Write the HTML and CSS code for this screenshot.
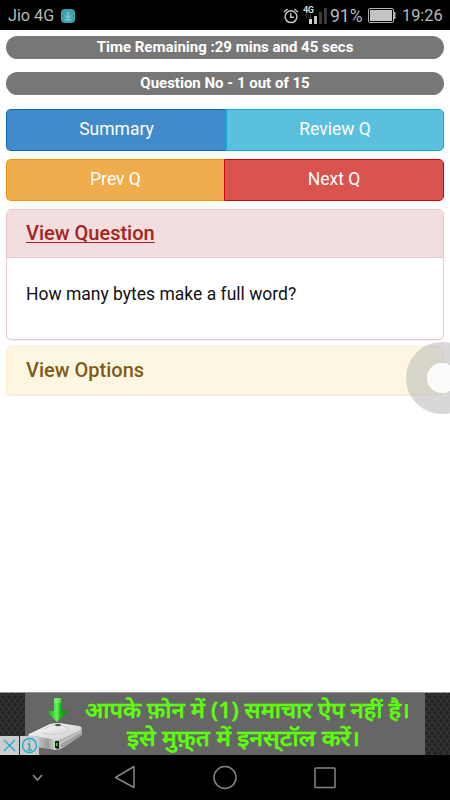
FILE: index.html
```html
<!DOCTYPE html>
<html lang="en">
<head>
    <meta charset="UTF-8">
    <meta name="viewport" content="width=device-width, initial-scale=1.0">
    <title>Quiz</title>
    <link rel="stylesheet" href="styles.css">
</head>
<body>
    <div class="status-bar">
        <span class="carrier">Jio 4G</span>
        <svg class="download" width="14" height="14" viewBox="0 0 14 14">
            <rect width="14" height="14" rx="4" fill="#38a3ac"/>
            <path d="M7 3v6M4 6.5l3 3 3-3M3.5 11h7" fill="none" stroke="#b5dce0" stroke-width="0.9"/>
        </svg>
        <svg class="alarm" width="16" height="16" viewBox="0 0 16 16" fill="none" stroke="#c4c4c4" stroke-width="1.5">
            <circle cx="8" cy="8.7" r="5.9"/>
            <path d="M1 4l3.6-3M15 4l-3.6-3M7.7 5.3v3.9h3.3"/>
        </svg>
        <svg class="signal" width="24" height="20" viewBox="0 0 24 20">
            <text class="net" x="0" y="8" textLength="11">4G</text>
            <path d="M3.5 8.5v5M1.5 11l2-2 2 2M5.5 11.5l2 2 2-2M7.5 8.5v5" fill="none" stroke="#333" stroke-width="1"/>
            <rect x="6" y="14" width="3" height="5" fill="#d5d5d5"/>
            <rect x="11" y="11" width="3" height="8" fill="#c4c4c4"/>
            <rect x="16" y="7" width="3" height="12" fill="#3b3b3b"/>
            <rect x="21" y="3" width="3" height="16" fill="#3b3b3b"/>
        </svg>
        <span class="percent">91%</span>
        <svg class="battery" width="28" height="15" viewBox="0 0 28 15">
            <rect x="0.5" y="0.5" width="25" height="14" rx="1.5" fill="none" stroke="#b5b5b5"/>
            <rect x="2" y="2" width="22" height="11" fill="#c4c4c4"/>
            <path d="M26 4h1.5v7H26z" fill="#b5b5b5"/>
        </svg>
        <span class="clock">19:26</span>
    </div>

    <div class="container">
        <div class="badge">Time Remaining :29 mins and 45 secs</div>
        <div class="badge">Question No - 1 out of 15</div>
        <div class="btn-group">
            <button class="btn btn-primary">Summary</button>
            <button class="btn btn-info">Review Q</button>
        </div>
        <div class="btn-group">
            <button class="btn btn-warning">Prev Q</button>
            <button class="btn btn-danger">Next Q</button>
        </div>
        <div class="panel panel-danger">
            <div class="panel-heading"><u>View Question</u></div>
            <div class="panel-body">How many bytes make a full word?</div>
        </div>
        <div class="panel panel-warning">
            <div class="panel-heading">View Options</div>
        </div>
        <svg class="assist" width="44" height="72" viewBox="0 0 44 72">
            <circle cx="36" cy="36" r="25.5" fill="none" stroke="#b4b4b4" stroke-opacity="0.52" stroke-width="21"/>
            <circle cx="36" cy="36" r="15" fill="#fbfbf9"/>
        </svg>
    </div>

    <div class="ad">
        <div class="ad-banner">
            <svg class="drive" width="60" height="61" viewBox="0 0 60 61">
                <defs>
                    <linearGradient id="arrow" x1="0" x2="1" y1="0" y2="0">
                        <stop offset="0" stop-color="#0c9410"/>
                        <stop offset="0.5" stop-color="#6bf05c"/>
                        <stop offset="0.65" stop-color="#14bd18"/>
                        <stop offset="1" stop-color="#087f0c"/>
                    </linearGradient>
                    <linearGradient id="top" x1="0" x2="1" y1="0" y2="1">
                        <stop offset="0" stop-color="#fff"/>
                        <stop offset="1" stop-color="#c9c9c9"/>
                    </linearGradient>
                    <linearGradient id="front" x1="0" x2="1" y1="0" y2="0">
                        <stop offset="0" stop-color="#eee"/>
                        <stop offset="0.7" stop-color="#999"/>
                        <stop offset="1" stop-color="#ddd"/>
                    </linearGradient>
                </defs>
                <path d="M3 42L28 31Q33 29 38 31L56 34 57 41 35 56 31 57 5 53z" fill="#999"/>
                <path d="M4 41L25 31Q30 30 34 30L54 33Q58 34 56 37L35 47Q32 48 28 47L5 43Q2 42 4 41z" fill="url(#top)"/>
                <path d="M4 42L31 47V57L5 53Q3 50 4 42z" fill="url(#front)"/>
                <path d="M34 48L57 37V42L36 56 32 57z" fill="#bbb"/>
                <path d="M36 52L57 40M36 54L56 42" stroke="#777" stroke-width="0.7"/>
                <path d="M19 36Q31 29 42 34Q47 37 38 40Q29 43 18 40" fill="none" stroke="#ccc" stroke-width="1"/>
                <ellipse cx="33" cy="32" rx="3" ry="1.3" fill="#555"/>
                <path d="M30 48h4v8l-4-1z" fill="#172717"/>
                <path d="M31 50h1.5v3H31z" fill="#42d33c"/>
                <path d="M29 5h7v13h7L32 29 21 18h8z" fill="url(#arrow)"/>
                <path d="M29 5h7v5h-7z" fill="#85eb79" opacity="0.6"/>
            </svg>
            <div class="ad-text" lang="hi">
                <svg width="328" height="60" viewBox="0 0 328 60">
                    <text x="0" y="25" textLength="325" lengthAdjust="spacingAndGlyphs">आपके फ़ोन में (1) समाचार ऐप नहीं है।</text>
                    <text x="42" y="53" textLength="233" lengthAdjust="spacingAndGlyphs">इसे मुफ़्&zwnj;त में इनस्&zwnj;टॉल करें।</text>
                </svg>
            </div>
        </div>
        <div class="ad-choices">
            <svg width="19" height="19" viewBox="0 0 19 19">
                <path d="M4 4l11 11M15 4L4 15" stroke="#18add2" stroke-width="1.3"/>
            </svg>
            <svg width="19" height="19" viewBox="0 0 19 19" fill="none" stroke="#18add2" stroke-width="1.4">
                <circle cx="9.5" cy="9.5" r="7"/>
                <path d="M7.5 8h2v6M7.3 14h4.5M8.8 5.3h1.4"/>
            </svg>
        </div>
    </div>

    <div class="nav-bar">
        <svg width="450" height="45" viewBox="0 0 450 45" fill="none" stroke="#858585" stroke-width="1.5">
            <path d="M33 20l4.5 5 4.5-5" stroke-width="1.8"/>
            <path d="M134 11.5v21L115.5 22.5z" stroke-linejoin="round"/>
            <circle cx="225" cy="22.5" r="11"/>
            <rect x="315" y="13" width="20" height="19.5" rx="0.8"/>
        </svg>
    </div>
</body>
</html>
```
FILE: styles.css
```css
* {
    box-sizing: border-box;
}
body {
    margin: 0;
    height: 800px;
    display: flex;
    flex-direction: column;
    background: #fff;
    font-family: Roboto, sans-serif;
    overflow: hidden;
}
.status-bar {
    height: 30px;
    flex: none;
    display: flex;
    align-items: center;
    padding: 1px 8px 0;
    background: #000;
    color: #b9b9b9;
    font-size: 16px;
    white-space: nowrap;
}
.carrier {
    width: 53px;
    font-size: 16.2px;
}
.alarm {
    margin-left: auto;
}
.signal {
    margin: -1px 3px 0 4px;
}
.net {
    font-size: 9px;
    font-weight: bold;
    fill: #d5d5d5;
}
.percent {
    width: 34px;
    font-size: 17.5px;
}
.battery {
    margin: 0 6px 0 4px;
}
.clock {
    width: 40px;
    font-size: 16.3px;
}
.container {
    position: relative;
    flex: 1;
    padding: 6px 6px 0;
}
.badge {
    height: 23px;
    margin-bottom: 13px;
    border-radius: 12px;
    background: #777;
    color: #fff;
    font-size: 15px;
    font-weight: bold;
    line-height: 23px;
    text-align: center;
}
.badge + .btn-group {
    margin-top: 14px;
}
.btn-group {
    display: flex;
    height: 42px;
    margin-bottom: 8px;
}
.btn {
    padding: 0 0 2px;
    border: 1px solid;
    color: #fff;
    font-family: inherit;
    font-size: 17.5px;
}
.btn:first-child {
    border-radius: 5px 0 0 5px;
}
.btn:last-child {
    flex: 1;
    border-radius: 0 5px 5px 0;
}
.btn-primary {
    width: 220px;
    background: #428bca;
    border-color: #0869b8;
    border-right: none;
}
.btn-info {
    background: #5bc0de;
    border-color: #08afd8;
}
.btn-warning {
    width: 218px;
    background: #f0ad4e;
    border-color: #ee950b;
    border-right: none;
}
.btn-danger {
    background: #d9534f;
    border-color: #cc0812;
}
.panel {
    margin-bottom: 6px;
    border: 1px solid;
    border-radius: 5px;
    overflow: hidden;
    box-shadow: 0 1px 1px rgba(0, 0, 0, 0.06);
}
.panel-heading {
    height: 48px;
    padding-left: 19px;
    font-size: 20px;
    font-weight: 500;
    line-height: 47px;
}
.panel-body {
    height: 81px;
    padding: 25px 19px;
    color: #111;
    font-size: 17.5px;
    line-height: 22px;
}
.panel-danger {
    border-color: #e8c8d0;
}
.panel-danger .panel-heading {
    background: #f2dede;
    border-bottom: 1px solid #e8c8d0;
    color: #a52422;
}
.panel-danger u {
    text-decoration-thickness: 1px;
    text-underline-offset: 2px;
}
.panel-warning {
    border-color: #faebcc;
}
.panel-warning .panel-heading {
    height: 47px;
    background: #fdf7e2;
    color: #805b19;
}
/* floating touch button */
.assist {
    position: absolute;
    top: 312px;
    right: 0;
}
.ad {
    position: relative;
    flex: none;
    height: 63px;
    padding: 0 25px;
    border-top: 1px solid #999;
    background-color: #343434;
    background-image: radial-gradient(circle, #242424 1.6px, transparent 2.2px), radial-gradient(circle, #242424 1.6px, transparent 2.2px);
    background-size: 6px 8px;
    background-position: 0 0, 3px 4px;
}
.ad-banner {
    display: flex;
    height: 62px;
    background: #666;
}
.ad-text {
    font-family: "Noto Sans", "Noto Sans Devanagari", sans-serif;
    font-size: 22px;
    font-weight: 500;
}
.ad-text text {
    fill: #5cff08;
    stroke: #5cff08;
    stroke-width: 0.5px;
}
.ad-choices {
    position: absolute;
    left: 0;
    bottom: 0;
    display: flex;
    gap: 1px;
}
.ad-choices svg {
    background: #ccc;
}
.nav-bar {
    flex: none;
    height: 45px;
    background: #000;
}
```
